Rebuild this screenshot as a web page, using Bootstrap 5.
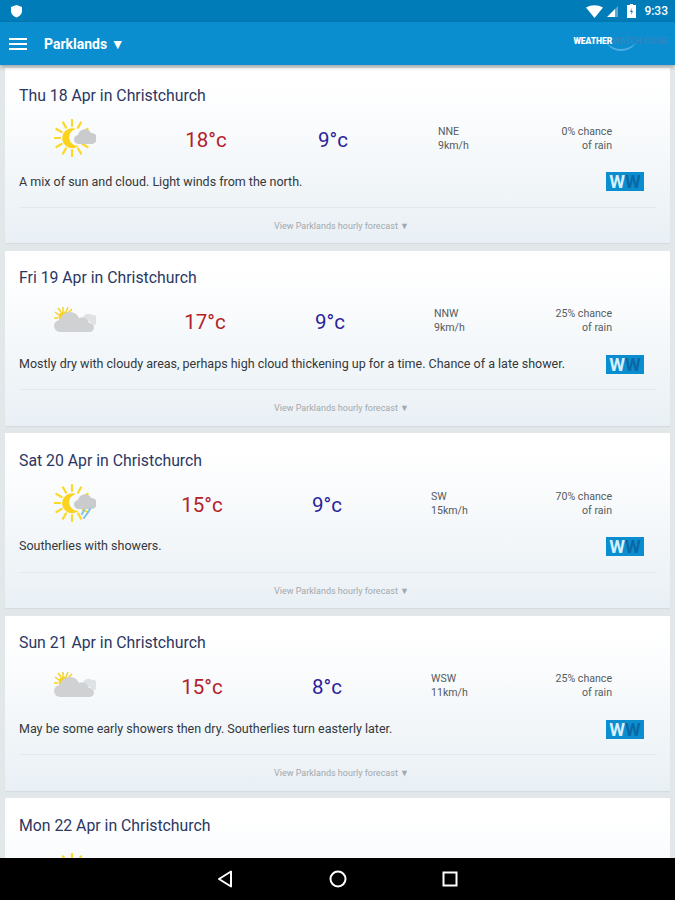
<!DOCTYPE html>
<html lang="en">
<head>
  <meta charset="UTF-8">
  <title>Parklands forecast</title>
  <meta name="viewport" content="width=device-width, initial-scale=1">
  <link href="https://cdn.jsdelivr.net/npm/bootstrap@5.3.3/dist/css/bootstrap.min.css" rel="stylesheet">
  <style>
    html, body { height: 100%; }
    body {
      margin: 0;
      overflow: hidden;
      background-color: #e2e7e9;
      font-family: Roboto, "Liberation Sans", sans-serif;
    }
    .status-strip { height: 22px; background-color: #007cb8; color: #fff; font-size: 12px; font-weight: 500; padding: 0 7px 0 10px; }
    .app-bar { height: 43px; padding: 1px 7px 0 9px; background-color: #0a8ed0; box-shadow: 0 2px 4px rgba(0,0,0,.3); z-index: 2; }
    .place-name { color: #fff; font-size: 14px; font-weight: 700; margin-left: 17px; }
    .site-logo { position: relative; margin-left: auto; margin-bottom: 6px; font-size: 8.6px; font-weight: 700; letter-spacing: -.1px; color: #2f86c0; white-space: nowrap; }
    .site-logo b { color: #fff; }
    .site-logo svg { position: absolute; left: 32px; top: 7px; }
    .feed { min-height: 0; padding: 3.4px 5px 0; display: flex; flex-direction: column; gap: 7.4px; overflow: hidden; }
    .day-card {
      flex: 0 0 175px;
      padding: 0 14px;
      border: 0;
      border-radius: 1px;
      background: linear-gradient(#fff 10%, #e9f0f5 100%);
      box-shadow: 0 1px 1px rgba(0,0,0,.06);
    }
    .day-title { margin: 17.6px 0 0; height: 19px; line-height: 19px; font-size: 15.8px; font-weight: 400; color: #2b3763; }
    .day-cols { display: grid; height: 50px; margin-top: 8px; align-items: center; }
    .cols-a { grid-template-columns: 112px 150px 104px 53px 1fr; }
    .cols-b { grid-template-columns: 112px 148px 102px 53px 1fr; }
    .cols-c { grid-template-columns: 112px 142px 108px 50px 1fr; }
    .weather-icon { display: block; margin: 0 auto; }
    .icon-peek { margin-top: 8px; }
    .temp { text-align: center; font-size: 20.5px; line-height: 1; padding-top: 4px; }
    .temp-hi { color: #b3202a; }
    .temp-lo { color: #2a239c; }
    .mini-text { font-size: 10.6px; line-height: 14px; color: #555b60; padding-top: 2px; }
    .rain-text { text-align: right; margin-right: 44px; white-space: nowrap; }
    .desc-row { height: 26px; margin-top: 6px; }
    .desc-text { font-size: 12.5px; color: #33383c; }
    .ww-badge {
      width: 38px; height: 19px; margin-right: 12px; flex: none;
      background-color: #0a8ed0; color: #0b68a6;
      font-size: 18px; line-height: 19px; font-weight: 700; text-align: center; letter-spacing: 0;
    }
    .ww-badge span { color: #d6effb; }
    .card-rule { height: 1px; background-color: #e3eaef; margin-top: 12px; }
    .hourly-link { margin-top: 12px; padding-left: 8px; text-align: center; font-size: 9px; line-height: 12px; color: #a3a8ac; }
    .nav-strip { flex: 0 0 42px; background-color: #000; z-index: 3; gap: 94.5px; }
  </style>
</head>
<body class="d-flex flex-column">

  <svg width="0" height="0" class="position-absolute">
    <defs>
      <g id="sun-full">
        <path stroke="#fbd92a" stroke-width="2.2" stroke-linecap="round" d="M30 19h6M28.400 13l5.200-3M24 8.600l3-5.200M18 7V1M12 8.600l-3-5.200M7.600 13l-5.200-3M6 19H0M7.600 25l-5.200 3M12 29.400l-3 5.200M18 31v6M24 29.400l3 5.200M28.400 25l5.200 3"/>
        <path d="M22 10A10 10 0 1 0 25 26.500 8 8 0 0 1 22 10z" fill="#fbd21c"/>
      </g>
      <path id="cloud-sm" d="M25 25a4.500 4.500 0 0 1-1-9 7 7 0 0 1 13-2 5.500 5.500 0 0 1 1 11z" fill="#c9cbcd"/>
      <g id="cloud-big">
        <path d="M29 11a6 6 0 0 1 9-2 5 5 0 0 1 2 10z" fill="#dfe2e5"/>
        <path d="M6 26a6 6 0 0 1 0-12 10 10 0 0 1 19-2 7 7 0 0 1 10 5 4.500 4.500 0 0 1 1 9z" fill="#cfd1d3"/>
      </g>
      <g id="sun-small">
        <path stroke="#f8d22a" stroke-width="1.5" d="M9 1l0 5M4 2l3 4M14 1l-2 5M18 3l-4 4M1 6l4 3M0 12l4 0"/>
        <circle cx="10" cy="11" r="5.500" fill="#fbd21c"/>
      </g>
    </defs>
  </svg>

  <!-- Status bar -->
  <div class="status-strip d-flex align-items-center justify-content-between flex-shrink-0">
    <svg width="13" height="14" viewBox="0 0 13 14"><path d="M6.500 1L12 3v4c0 3-2.500 5.500-5.500 6.500C3.500 12.500 1 10 1 7V3z" fill="#fff"/></svg>
    <div class="d-flex align-items-center">
      <svg width="17" height="13" viewBox="0 0 17 13"><path d="M0 2.500Q8.500-2 17 2.500L8.500 13z" fill="#fff"/></svg>
      <svg width="12" height="12" viewBox="0 0 12 12" class="ms-1"><path d="M0 12L8 4v8z" fill="#fff"/><path d="M8 4l3-3v11H8z" fill="#fff" fill-opacity=".35"/></svg>
      <svg width="9" height="14" viewBox="0 0 9 14" class="ms-2"><path d="M3 0h3v1h3v13H0V1h3z" fill="#fff"/><path d="M5 4L3 8h1.500L4 11l2-4H4.500z" fill="#0a7db5"/></svg>
      <span class="ms-2">9:33</span>
    </div>
  </div>

  <!-- Toolbar -->
  <nav class="app-bar d-flex align-items-center flex-shrink-0">
    <svg width="18" height="14" viewBox="0 0 18 14" class="flex-shrink-0"><path d="M0 2h18M0 7h18M0 12h18" stroke="#fff" stroke-width="2"/></svg>
    <span class="place-name">Parklands ▼</span>
    <span class="site-logo">
      <svg width="32" height="9" viewBox="0 0 32 9"><path d="M1 1q15 12 30 0q-6 8-15 8t-15-8z" fill="#6dbde6" fill-opacity=".7"/></svg>
      <b>WEATHER</b><span>WATCH.CO.NZ</span>
    </span>
  </nav>

  <!-- Forecast cards -->
  <main class="feed flex-grow-1">

    <section class="card day-card flex-shrink-0">
      <h2 class="day-title">Thu 18 Apr in Christchurch</h2>
      <div class="day-cols cols-a">
        <svg class="weather-icon" width="42" height="38" viewBox="0 0 42 38">
          <use href="#sun-full"/>
          <use href="#cloud-sm"/>
        </svg>
        <div class="temp temp-hi">18°c</div>
        <div class="temp temp-lo">9°c</div>
        <div></div>
        <div class="d-flex mini-text justify-content-between">
          <div>NNE<br>9km/h</div>
          <div class="rain-text">0% chance<br>of rain</div>
        </div>
      </div>
      <div class="desc-row d-flex align-items-center justify-content-between">
        <div class="desc-text">A mix of sun and cloud. Light winds from the north.</div>
        <div class="ww-badge"><span>W</span>W</div>
      </div>
      <div class="card-rule"></div>
      <div class="hourly-link">View Parklands hourly forecast ▼</div>
    </section>

    <section class="card day-card flex-shrink-0">
      <h2 class="day-title">Fri 19 Apr in Christchurch</h2>
      <div class="day-cols cols-b">
        <svg class="weather-icon" width="42" height="28" viewBox="0 0 42 28">
          <use href="#sun-small"/>
          <use href="#cloud-big"/>
        </svg>
        <div class="temp temp-hi">17°c</div>
        <div class="temp temp-lo">9°c</div>
        <div></div>
        <div class="d-flex mini-text justify-content-between">
          <div>NNW<br>9km/h</div>
          <div class="rain-text">25% chance<br>of rain</div>
        </div>
      </div>
      <div class="desc-row d-flex align-items-center justify-content-between">
        <div class="desc-text">Mostly dry with cloudy areas, perhaps high cloud thickening up for a time. Chance of a late shower.</div>
        <div class="ww-badge"><span>W</span>W</div>
      </div>
      <div class="card-rule"></div>
      <div class="hourly-link">View Parklands hourly forecast ▼</div>
    </section>

    <section class="card day-card flex-shrink-0">
      <h2 class="day-title">Sat 20 Apr in Christchurch</h2>
      <div class="day-cols cols-c">
        <svg class="weather-icon" width="42" height="38" viewBox="0 0 42 38">
          <use href="#sun-full"/>
          <use href="#cloud-sm"/>
          <path d="M30 26l-2 4M36 25l-3 5M32 31l-2 3" stroke="#7fc3ea" stroke-width="2" stroke-linecap="round"/>
        </svg>
        <div class="temp temp-hi">15°c</div>
        <div class="temp temp-lo">9°c</div>
        <div></div>
        <div class="d-flex mini-text justify-content-between">
          <div>SW<br>15km/h</div>
          <div class="rain-text">70% chance<br>of rain</div>
        </div>
      </div>
      <div class="desc-row d-flex align-items-center justify-content-between">
        <div class="desc-text">Southerlies with showers.</div>
        <div class="ww-badge"><span>W</span>W</div>
      </div>
      <div class="card-rule"></div>
      <div class="hourly-link">View Parklands hourly forecast ▼</div>
    </section>

    <section class="card day-card flex-shrink-0">
      <h2 class="day-title">Sun 21 Apr in Christchurch</h2>
      <div class="day-cols cols-c">
        <svg class="weather-icon" width="42" height="28" viewBox="0 0 42 28">
          <use href="#sun-small"/>
          <use href="#cloud-big"/>
        </svg>
        <div class="temp temp-hi">15°c</div>
        <div class="temp temp-lo">8°c</div>
        <div></div>
        <div class="d-flex mini-text justify-content-between">
          <div>WSW<br>11km/h</div>
          <div class="rain-text">25% chance<br>of rain</div>
        </div>
      </div>
      <div class="desc-row d-flex align-items-center justify-content-between">
        <div class="desc-text">May be some early showers then dry. Southerlies turn easterly later.</div>
        <div class="ww-badge"><span>W</span>W</div>
      </div>
      <div class="card-rule"></div>
      <div class="hourly-link">View Parklands hourly forecast ▼</div>
    </section>

    <section class="card day-card flex-shrink-0">
      <h2 class="day-title">Mon 22 Apr in Christchurch</h2>
      <div class="day-cols cols-c">
        <svg class="weather-icon icon-peek" width="42" height="38" viewBox="0 0 42 38"><use href="#sun-full"/></svg>
      </div>
    </section>

  </main>

  <!-- Android navigation -->
  <div class="nav-strip d-flex align-items-center justify-content-center">
    <svg width="18" height="20" viewBox="0 0 18 20"><path d="M15 2.500v15L3 10z" fill="none" stroke="#fff" stroke-width="2" stroke-linejoin="round"/></svg>
    <svg width="18" height="20" viewBox="0 0 18 20"><circle cx="9" cy="10" r="7.500" fill="none" stroke="#fff" stroke-width="2"/></svg>
    <svg width="18" height="20" viewBox="0 0 18 20"><rect x="2.500" y="3.500" width="13" height="13" fill="none" stroke="#fff" stroke-width="2"/></svg>
  </div>

  <script src="https://cdn.jsdelivr.net/npm/bootstrap@5.3.3/dist/js/bootstrap.bundle.min.js"></script>
</body>
</html>
